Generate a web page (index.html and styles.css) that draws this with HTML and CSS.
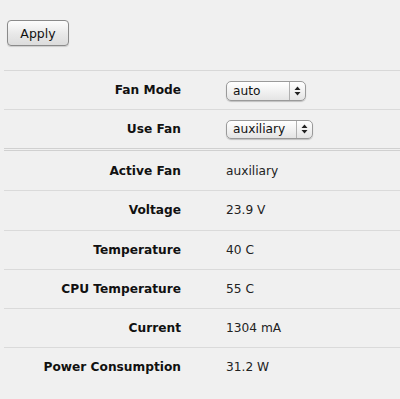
FILE: index.html
```html
<!DOCTYPE html>
<html>
<head>
<meta charset="utf-8">
<link rel="stylesheet" href="styles.css">
</head>
<body>
<div class="toolbar">
  <button class="btn">Apply</button>
</div>
<div class="table">
  <div class="row">
    <div class="label">Fan Mode</div>
    <div class="value">
      <div class="select sel-auto"><span class="sel-text">auto</span><span class="sel-arrow"><svg width="7" height="10" viewBox="0 0 7 10"><path d="M3.5 0.5 L6.5 4 L0.5 4 Z M0.5 6 L6.5 6 L3.5 9.5 Z" fill="#222"/></svg></span></div>
    </div>
  </div>
  <div class="row row-double">
    <div class="label">Use Fan</div>
    <div class="value">
      <div class="select sel-aux"><span class="sel-text">auxiliary</span><span class="sel-arrow"><svg width="7" height="10" viewBox="0 0 7 10"><path d="M3.5 0.5 L6.5 4 L0.5 4 Z M0.5 6 L6.5 6 L3.5 9.5 Z" fill="#222"/></svg></span></div>
    </div>
  </div>
  <div class="row row-tall">
    <div class="label">Active Fan</div>
    <div class="value">auxiliary</div>
  </div>
  <div class="row">
    <div class="label">Voltage</div>
    <div class="value">23.9 V</div>
  </div>
  <div class="row">
    <div class="label">Temperature</div>
    <div class="value">40 C</div>
  </div>
  <div class="row">
    <div class="label">CPU Temperature</div>
    <div class="value">55 C</div>
  </div>
  <div class="row">
    <div class="label">Current</div>
    <div class="value">1304 mA</div>
  </div>
  <div class="row last">
    <div class="label">Power Consumption</div>
    <div class="value">31.2 W</div>
  </div>
</div>
</body>
</html>
```
FILE: styles.css
```css
html, body {
  margin: 0;
  padding: 0;
  background: #f0f0f0;
  font-family: "DejaVu Sans", Verdana, sans-serif;
  font-size: 12.2px;
  color: #111;
}
.toolbar {
  padding: 20px 0 0 7px;
  height: 70px;
  box-sizing: border-box;
}
.btn {
  width: 62px;
  height: 26px;
  border: 1px solid #8a8a8a;
  border-radius: 4px;
  background: linear-gradient(#fdfdfd, #e8e8e8 55%, #dcdcdc);
  box-shadow: 0 1px 1px rgba(0,0,0,0.15);
  font-family: "DejaVu Sans", Verdana, sans-serif;
  font-size: 12.5px;
  color: #111;
  padding: 0;
  margin: 0;
}
.table {
  margin-left: 4px;
  border-top: 1px solid #d8d8d8;
}
.row {
  display: flex;
  align-items: center;
  height: 38.2px;
  border-bottom: 1px solid #dadada;
}
.row-double {
  border-bottom: 3px double #d0d0d0;
}
.row-tall {
  height: 39px;
}
.row.last {
  border-bottom: none;
}
.label {
  width: 177px;
  text-align: right;
  font-weight: bold;
  color: #111;
}
.value {
  margin-left: 45px;
  color: #222;
  display: flex;
  align-items: center;
}
.select {
  display: flex;
  align-items: stretch;
  border: 1px solid #9a9a9a;
  border-radius: 5px;
  background: linear-gradient(#ffffff, #f2f2f2 50%, #e4e4e4);
  box-shadow: 0 1px 1px rgba(0,0,0,0.2);
  box-sizing: border-box;
}
.sel-auto { width: 80px; height: 20px; margin-top: 1px; }
.sel-aux { width: 87px; height: 19px; }
.sel-text {
  flex: 1;
  padding-left: 6px;
  display: flex;
  align-items: center;
  color: #111;
}
.sel-arrow {
  width: 15px;
  border-left: 1px solid #b0b0b0;
  display: flex;
  align-items: center;
  justify-content: center;
}
```
